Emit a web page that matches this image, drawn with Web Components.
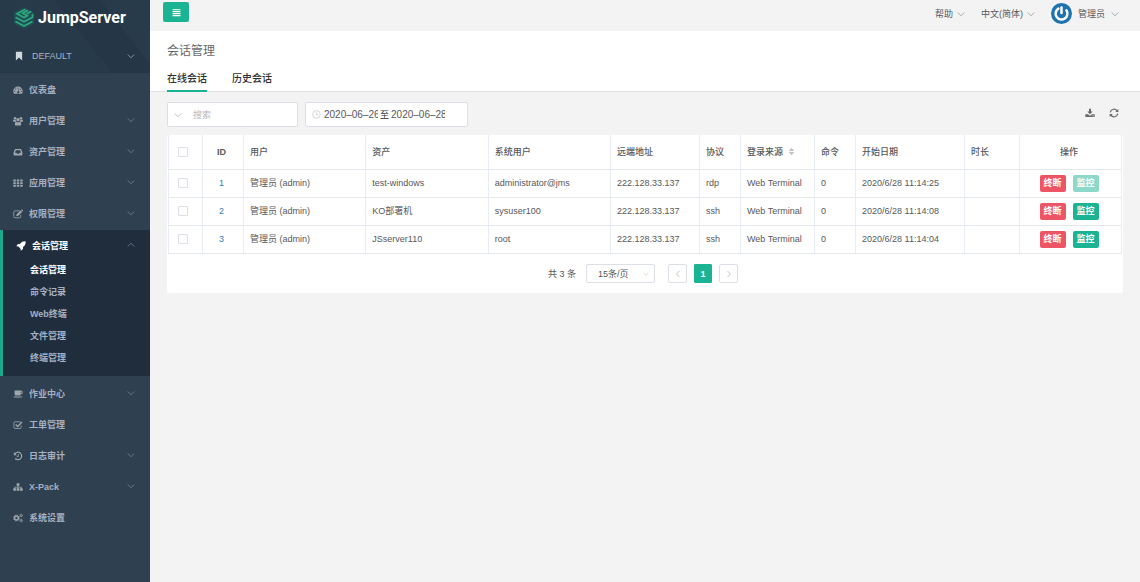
<!DOCTYPE html>
<html lang="zh-CN">
<head>
<meta charset="utf-8">
<title>会话管理 - JumpServer</title>
<style>
  html, body { margin: 0; min-height: 100%; }
  body {
    background: #f3f3f4;
    color: #56585c;
    font: 9px/14px "Liberation Sans", "Noto Sans CJK SC", sans-serif;
  }
</style>
</head>
<body>
<js-app>
  <js-sidebar slot="side">
    <js-nav-item icon="dashboard" label="仪表盘"></js-nav-item>
    <js-nav-item icon="users" label="用户管理" more></js-nav-item>
    <js-nav-item icon="inbox" label="资产管理" more></js-nav-item>
    <js-nav-item icon="th" label="应用管理" more></js-nav-item>
    <js-nav-item icon="edit" label="权限管理" more></js-nav-item>
    <js-nav-item icon="rocket" label="会话管理" more open>
      <js-sub-item label="会话管理" active></js-sub-item>
      <js-sub-item label="命令记录"></js-sub-item>
      <js-sub-item label="Web终端"></js-sub-item>
      <js-sub-item label="文件管理"></js-sub-item>
      <js-sub-item label="终端管理"></js-sub-item>
    </js-nav-item>
    <js-nav-item icon="coffee" label="作业中心" more></js-nav-item>
    <js-nav-item icon="check" label="工单管理"></js-nav-item>
    <js-nav-item icon="history" label="日志审计" more></js-nav-item>
    <js-nav-item icon="sitemap" label="X-Pack" more></js-nav-item>
    <js-nav-item icon="cogs" label="系统设置"></js-nav-item>
  </js-sidebar>
  <js-topbar></js-topbar>
  <js-page-head>
    <span slot="title">会话管理</span>
  </js-page-head>
  <js-toolbar></js-toolbar>
  <js-card>
    <js-session-table></js-session-table>
    <js-pagination></js-pagination>
  </js-card>
</js-app>

<script>
const define = (name, html, setup) => {
  const template = document.createElement('template');
  template.innerHTML = html;
  customElements.define(name, class extends HTMLElement {
    static observedAttributes = ['name'];
    constructor() {
      super();
      this.attachShadow({ mode: 'open' }).append(template.content.cloneNode(true));
    }
    connectedCallback() { if (setup) setup.call(this, this.shadowRoot); }
    attributeChangedCallback() { if (setup && this.isConnected) setup.call(this, this.shadowRoot); }
  });
};

const ICONS = {
  dashboard: '<path fill="currentColor" fill-rule="evenodd" d="M8 2.5A7.6 7.6 0 0 0 .4 10c0 1.500.4 2.900 1.100 4h13c.7-1.100 1.100-2.500 1.100-4A7.600 7.600 0 0 0 8 2.500zM2.700 9a1 1 0 1 1 0 2 1 1 0 0 1 0-2zm1.600-3.600a1 1 0 1 1 0 2 1 1 0 0 1 0-2zM8 3.800a1 1 0 1 1 0 2 1 1 0 0 1 0-2zm1 3 .9.200-.7 3a1.800 1.800 0 1 1-1-.2zm2.800-1.400a1 1 0 1 1 0 2 1 1 0 0 1 0-2zM13.300 9a1 1 0 1 1 0 2 1 1 0 0 1 0-2z"/>',
  users: '<g fill="currentColor"><circle cx="3.300" cy="3.600" r="2"/><circle cx="12.700" cy="3.600" r="2"/><circle cx="8" cy="5.800" r="2.700"/><path d="M.2 9V7.300C.2 6 .8 5.500 1.800 5.700c1 .6 1.900.6 2.800.2A3.700 3.700 0 0 0 5.300 9zM15.800 9V7.300c0-1.300-.6-1.800-1.600-1.600-1 .6-1.900.6-2.800.2A3.700 3.700 0 0 1 10.700 9zM3 13.400c0-2.600.6-4.300 2.400-4.400 1.600 1.200 3.600 1.200 5.200 0 1.800.1 2.400 1.800 2.400 4.400 0 1-.7 1.600-1.700 1.600H4.700C3.700 15 3 14.400 3 13.400z"/></g>',
  inbox: '<path fill="currentColor" fill-rule="evenodd" d="M4.100 3h7.800c.5 0 .8.2 1 .6L15 8.500v4c0 .6-.4 1-1 1H2c-.6 0-1-.4-1-1v-4l2.100-4.900c.2-.4.5-.6 1-.6zm.5 2L3 9h2.500l.9 1.800h3.200l.9-1.800H13l-1.600-4z"/>',
  th: '<path fill="currentColor" d="M.5 2.500h4v3h-4zM6 2.500h4v3H6zM11.500 2.500h4v3h-4zM.5 6.700h4v3h-4zM6 6.700h4v3H6zM11.500 6.700h4v3h-4zM.5 10.900h4v3h-4zM6 10.900h4v3H6zM11.500 10.900h4v3h-4z"/>',
  edit: '<g fill="none" stroke="currentColor"><path stroke-width="1.300" d="M11 3H3a1.800 1.800 0 0 0-1.800 1.800v7.400A1.800 1.800 0 0 0 3 14h7.500a1.800 1.800 0 0 0 1.800-1.800V9.500"/></g><path fill="currentColor" d="M5.500 11.300V8.700L12 2.200l2.600 2.600-6.500 6.500zM12.700 1.500l.7-.6c.4-.4.900-.4 1.200 0L16 2.300c.3.300.3.800 0 1.200l-.7.600z"/>',
  rocket: '<path fill="currentColor" d="M15.400.6c-4-.2-6.600 1-9.100 4.200H3.100L.5 8.500l3.300.2 3.500 3.500.2 3.300 3.700-2.600V9.700c3.200-2.500 4.400-5.100 4.200-9.100z"/>',
  coffee: '<path fill="currentColor" fill-rule="evenodd" d="M2.500 2.500h10.200a2.900 2.900 0 0 1 0 5.800h-.4c-.2 1.400-1 2.200-2.300 2.200H5c-1.600 0-2.500-.9-2.500-2.500zm9.800 1.600v2.600h.4a1.300 1.300 0 0 0 0-2.600zM.5 12h14.800c-.3 1.100-1.200 1.700-2.400 1.700h-10C1.700 13.700.8 13.100.5 12z"/>',
  check: '<g fill="none" stroke="currentColor"><path stroke-width="1.300" d="M12 2.800H3A1.500 1.500 0 0 0 1.500 4.300V12A1.500 1.500 0 0 0 3 13.500h8.500A1.500 1.500 0 0 0 13 12V9"/><path stroke-width="2.200" d="m4.300 7.200 3.100 3.100 7-7"/></g>',
  history: '<path fill="none" stroke="currentColor" stroke-width="1.900" d="M3 4.300A6 6 0 1 1 3.400 12"/><path fill="currentColor" d="M1.300 1.800v5h5z"/><path fill="none" stroke="currentColor" stroke-width="1.300" d="M8.500 5v4H5.800"/>',
  sitemap: '<path fill="currentColor" d="M5.800 2h4.400v4H8.700v1.500h5.100V10h1.700v4h-4.200v-4h1.200V8.700H8.700V10h1.500v4H5.800v-4h1.500V8.700H3.500V10h1.200v4H.5v-4h1.700V7.500h5.100V6H5.800z"/>',
  cogs: '<g fill="none" stroke="currentColor"><circle cx="5.500" cy="8" r="3.100" stroke-width="2.300"/><circle cx="5.500" cy="8" r="4.700" stroke-width="1.400" stroke-dasharray="1.800 1.890"/><circle cx="13" cy="4" r="1.500" stroke-width="1.300"/><circle cx="13" cy="12" r="1.500" stroke-width="1.300"/><circle cx="13" cy="4" r="2.400" stroke-width=".9" stroke-dasharray="1.200 1.310"/><circle cx="13" cy="12" r="2.400" stroke-width=".9" stroke-dasharray="1.200 1.310"/></g>',
  bookmark: '<path fill="currentColor" d="M3 1h10v14l-5-4.500L3 15z"/>',
  bars: '<path fill="currentColor" d="M1 2h14v2H1zM1 5.500h14v2H1zM1 9h14v2H1zM1 12.500h14v2H1z"/>',
  down: '<path fill="none" stroke="currentColor" stroke-width="1.500" d="m1.500 5 6.500 6.500L14.500 5"/>',
  up: '<path fill="none" stroke="currentColor" stroke-width="1.500" d="M1.500 11 8 4.500l6.500 6.500"/>',
  left: '<path fill="none" stroke="currentColor" stroke-width="1.700" d="M11 2 5 8l6 6"/>',
  right: '<path fill="none" stroke="currentColor" stroke-width="1.700" d="m5 2 6 6-6 6"/>',
  clock: '<g fill="none" stroke="currentColor" stroke-width="1.200"><circle cx="8" cy="8" r="6.800"/><path d="M8 4v4.500h3.500"/></g>',
  download: '<path fill="currentColor" fill-rule="evenodd" d="M6.400 1h3.200v4.500h2.900L8 10 3.500 5.500h2.900zM.5 9.800h4.300L8 12.500l3.200-2.700h4.300v4.700H.5zm10.300 2.200v1.200H12V12zm2.200 0v1.200h1.200V12z"/>',
  refresh: '<g fill="none" stroke="currentColor" stroke-width="1.900"><path d="M2 7a6.100 6.100 0 0 1 11-2.500M14 9a6.100 6.100 0 0 1-11 2.500"/></g><path fill="currentColor" d="M15 1.500v5h-5zM1 14.500v-5h5z"/>',
  sort: '<path fill="currentColor" d="M8 1.500 13 7H3zM8 14.500 3 9h10z"/>',
  avatar: '<circle cx="8" cy="8" r="8" fill="#1e73ae"/><path d="M5.600 4.300A4.500 4.500 0 1 0 11.800 5.600" fill="none" stroke="#fff" stroke-width="1.900" stroke-linecap="round"/><path d="M8 3.500v4.200" fill="none" stroke="#fff" stroke-width="1.900" stroke-linecap="round"/>'
};

define('js-icon', `
  <style>
    :host { display: inline-flex; flex: none; width: 10px; height: 10px; }
    svg { display: block; width: 100%; height: 100%; }
  </style>
  <svg viewBox="0 0 16 16" aria-hidden="true"></svg>`,
  function (root) { root.querySelector('svg').innerHTML = ICONS[this.getAttribute('name')] || ''; });

define('js-app', `
  <style>
    :host { display: grid; grid-template-columns: 150px minmax(0, 1fr); min-height: 100vh; }
    main { min-width: 0; }
  </style>
  <slot name="side"></slot>
  <main><slot></slot></main>`);

define('js-logo', `
  <style>
    :host { display: block; }
    a { display: flex; align-items: center; gap: 4px; color: #fff; text-decoration: none;
        font: 700 16px/22px Roboto, sans-serif; }
    svg { width: 20px; height: 22px; flex: none; }
  </style>
  <a href="#">
    <svg viewBox="0 0 20 22" aria-hidden="true">
      <path d="M10 0 20 5.500v11L10 22 0 16.500v-11z" fill="#1d4f53"/>
      <g fill="none" stroke="#2fa67f" stroke-width="1.800">
        <path d="M11.500 2.200 3 6.700l7 3.800 3.300-1.800-4.500-2.500 5.200-2.800"/>
        <path d="m12.500 7 4.700-2.600"/>
        <path d="M1.500 10.200 10 14.800l8.500-4.600V7"/>
        <path d="m1.500 14.500 8.500 4.600 8.500-4.600"/>
      </g>
    </svg>
    <span>JumpServer</span>
  </a>`);

define('js-sidebar', `
  <style>
    :host { display: block; background: #2f4050; color: #a7b1c2; }
    header { box-sizing: border-box; height: 73px; padding: 7px 15px 0 14px;
      background: linear-gradient(52deg, #273a4a 0 54%, #253746 54% 76%, #283b4b 76%); }
    nav { padding-top: 1px; }
    .org { display: flex; align-items: center; width: 100%; height: 22px; margin-top: 16px; padding: 0;
      border: 0; background: none; color: inherit; font: inherit; text-align: left; }
    .org span { flex: 1; margin-left: 8px; }
    .org js-icon:first-child { color: #d3d8e0; }
    .org js-icon:last-child { width: 8px; height: 8px; }
  </style>
  <header>
    <js-logo></js-logo>
    <button class="org" type="button"><js-icon name="bookmark"></js-icon><span>DEFAULT</span><js-icon name="down"></js-icon></button>
  </header>
  <nav aria-label="主菜单"><slot></slot></nav>`);

define('js-nav-item', `
  <style>
    :host { display: block; font-weight: 700; }
    :host([open]) { border-left: 3px solid #19aa8d; background: #1f2d3d; padding-bottom: 9px; margin: 1px 0 2px; color: #fff; }
    a { display: flex; align-items: center; height: 31px; padding: 0 15px 0 13px; color: inherit; text-decoration: none; }
    span { flex: 1; margin-left: 6px; }
    .icon { color: #a0a6ad; }
    :host([open]) .icon { color: #fff; }
    .arrow { width: 8px; height: 8px; margin-bottom: 2px; color: #7d8a9b; }
    .subs { display: flex; flex-direction: column; gap: 4px; }
  </style>
  <a href="#"><js-icon class="icon"></js-icon><span></span></a>
  <div class="subs"><slot></slot></div>`,
  function (root) {
    const link = root.querySelector('a');
    root.querySelector('.icon').setAttribute('name', this.getAttribute('icon'));
    root.querySelector('span').textContent = this.getAttribute('label');
    if (this.hasAttribute('more') && !root.querySelector('.arrow')) {
      const arrow = document.createElement('js-icon');
      arrow.className = 'arrow';
      arrow.setAttribute('name', this.hasAttribute('open') ? 'up' : 'down');
      link.append(arrow);
    }
  });

define('js-sub-item', `
  <style>
    :host { display: block; color: #a7b1c2; }
    :host([active]) { color: #fff; }
    a { display: block; padding-left: 27px; line-height: 18px; color: inherit; text-decoration: none; }
  </style>
  <a href="#"></a>`,
  function (root) { root.querySelector('a').textContent = this.getAttribute('label'); });

define('js-topbar', `
  <style>
    :host { display: flex; justify-content: space-between; height: 31px; padding: 0 21px 0 13px; }
    button { border: 0; padding: 0; background: none; color: inherit; font: inherit; }
    .toggle { display: flex; align-items: center; justify-content: center; width: 26px; height: 20px;
      margin-top: 2px; border-radius: 2px; background: #1ab394; color: #fff; }
    .toggle js-icon { width: 9px; height: 9px; }
    nav { display: flex; align-items: center; height: 27px; gap: 16px; }
    nav button { display: flex; align-items: center; gap: 4px; }
    nav js-icon { width: 8px; height: 8px; color: #8c9096; }
    nav .face { width: 21px; height: 21px; }
    .user { gap: 6px; }
  </style>
  <button class="toggle" type="button" aria-label="菜单"><js-icon name="bars"></js-icon></button>
  <nav>
    <button type="button">帮助<js-icon name="down"></js-icon></button>
    <button type="button">中文(简体)<js-icon name="down"></js-icon></button>
    <button type="button" class="user"><js-icon class="face" name="avatar"></js-icon>管理员<js-icon name="down"></js-icon></button>
  </nav>`);

define('js-page-head', `
  <style>
    :host { display: block; padding: 10px 17px 0; background: #fff; border-bottom: 1px solid #dfe2e6; }
    h1 { margin: 0; color: #676a6c; font-size: 12px; line-height: 20px; font-weight: 400; }
    nav { display: flex; gap: 25px; margin-top: 8px; }
    a { padding: 2px 0 3px; border-bottom: 2px solid transparent; color: #303133; font-size: 10px;
      line-height: 16px; font-weight: 500; text-decoration: none; margin-bottom: -1px; }
    a[aria-current] { border-color: #1ab394; }
  </style>
  <h1><slot name="title"></slot></h1>
  <nav><a href="#online" aria-current="page">在线会话</a><a href="#history">历史会话</a></nav>`);

define('js-toolbar', `
  <style>
    :host { display: flex; align-items: center; gap: 7px; padding: 10px 17px 8px; }
    .box { box-sizing: border-box; display: flex; align-items: center; height: 25px; padding: 0 8px 0 6px;
      background: #fff; border: 1px solid #dcdfe6; border-radius: 2px; }
    .search { width: 131px; }
    .dates { width: 163px; color: #303133; }
    input { min-width: 0; padding: 0; border: 0; outline: 0; background: none; color: #56585c; font: inherit; }
    .search input { flex: 1; margin-left: 11px; }
    ::placeholder { color: #b4b8bf; opacity: 1; }
    .dates input { width: 54px; font-size: 10px; }
    .dates span { margin: 0 2px; }
    .box js-icon { width: 8px; height: 8px; color: #a8abb2; }
    .dates js-icon { width: 9px; height: 9px; margin-right: 3px; color: #c0c4cc; }
    .tools { display: flex; gap: 14px; margin: 0 4px 4px auto; }
    button { display: flex; padding: 0; border: 0; background: none; color: #676a6c; }
  </style>
  <label class="box search"><js-icon name="down"></js-icon><input type="text" placeholder="搜索" aria-label="搜索"></label>
  <div class="box dates"><js-icon name="clock"></js-icon><input type="text" value="2020–06–26" aria-label="开始日期"><span>至</span><input type="text" value="2020–06–28" aria-label="结束日期"></div>
  <div class="tools">
    <button type="button" aria-label="导出"><js-icon name="download"></js-icon></button>
    <button type="button" aria-label="刷新"><js-icon name="refresh"></js-icon></button>
  </div>`);

define('js-card', `
  <style>
    :host { display: block; margin: 0 17px; padding: 0 1px; background: #fff; border-radius: 2px; }
  </style>
  <slot></slot>`);

define('js-session-table', `
  <style>
    :host { display: block; }
    table { width: 100%; table-layout: fixed; border-collapse: separate; border-spacing: 0; border-left: 1px solid #e8edf5; }
    th, td { box-sizing: border-box; height: 28px; padding: 0 0 1px 6px; border-right: 1px solid #e8edf5;
      border-bottom: 1px solid #e3e8f1; text-align: left; white-space: nowrap; color: #56585c; }
    th { height: 35px; font-weight: 500; }
    .pick { padding-left: 9px; }
    .mid { padding: 0 3px 1px 0; text-align: center; }
    th.id { font-weight: 700; }
    td a { color: #337ab7; text-decoration: none; }
    input { display: block; appearance: none; box-sizing: border-box; width: 10px; height: 10px; margin: 0;
      border: 1px solid #dcdfe6; border-radius: 1px; background: #fff; }
    .ops { display: flex; justify-content: center; gap: 7px; }
    .ops button { width: 26px; height: 17px; padding: 0; border: 0; border-radius: 2px; color: #fff;
      font: inherit; font-weight: 700; background: #1ab394; }
    .ops .kill { background: #ed5565; }
    .ops button:disabled { background: #8cd9c9; }
    .sort { display: inline-flex; align-items: center; gap: 4px; padding: 0; border: 0; background: none; color: inherit; font: inherit; }
    .sort js-icon { width: 9px; height: 9px; color: #c0c4cc; }
  </style>
  <table>
    <colgroup>
      <col style="width:34px"><col style="width:41px"><col><col><col><col style="width:89px"><col style="width:41px"><col style="width:74px"><col style="width:41px"><col style="width:109px"><col style="width:55px"><col style="width:102px">
    </colgroup>
    <thead>
      <tr>
        <th class="pick"><input type="checkbox" aria-label="全选"></th>
        <th class="mid id">ID</th><th>用户</th><th>资产</th><th>系统用户</th><th>远端地址</th><th>协议</th>
        <th><button class="sort" type="button">登录来源<js-icon name="sort"></js-icon></button></th>
        <th>命令</th><th>开始日期</th><th>时长</th><th class="mid">操作</th>
      </tr>
    </thead>
    <tbody></tbody>
  </table>`,
  function (root) {
    const rows = [
      ['test-windows', 'administrator@jms', 'rdp', '25', true],
      ['KO部署机', 'sysuser100', 'ssh', '08', false],
      ['JSserver110', 'root', 'ssh', '04', false]
    ];
    root.querySelector('tbody').innerHTML = rows.map(([asset, account, protocol, seconds, locked], i) => `
      <tr>
        <td class="pick"><input type="checkbox" aria-label="选择 ${i + 1}"></td>
        <td class="mid"><a href="#${i + 1}">${i + 1}</a></td>
        <td>管理员 (admin)</td><td>${asset}</td><td>${account}</td><td>222.128.33.137</td><td>${protocol}</td>
        <td>Web Terminal</td><td>0</td><td>2020/6/28 11:14:${seconds}</td><td></td>
        <td class="mid"><div class="ops"><button type="button" class="kill">终断</button><button type="button"${locked ? ' disabled' : ''}>监控</button></div></td>
      </tr>`).join('');
  });

define('js-pagination', `
  <style>
    :host { display: flex; align-items: center; justify-content: center; height: 39px; padding-right: 4px; }
    .size { position: relative; display: flex; align-items: center; margin: 0 13px 0 10px; }
    select { appearance: none; box-sizing: border-box; width: 69px; height: 19px; padding: 0 16px 0 11px; border: 1px solid #dcdfe6;
      border-radius: 2px; background: #fff; color: #56585c; font: inherit; }
    .size js-icon { position: absolute; right: 6px; width: 6px; height: 6px; color: #c0c4cc; pointer-events: none; }
    .pages { display: flex; gap: 7px; }
    .pages button { box-sizing: border-box; display: flex; align-items: center; justify-content: center; width: 19px; height: 19px;
      padding: 0; border: 1px solid #dcdfe6; border-radius: 2px; background: #fff; color: #b4b8bf; font: inherit; }
    .pages [aria-current] { width: 18px; border-color: #1ab394; border-radius: 1px; background: #1ab394; color: #fff; font-weight: 700; }
    .pages js-icon { width: 8px; height: 8px; }
  </style>
  <span>共 3 条</span>
  <div class="size"><select aria-label="每页条数"><option>15条/页</option></select><js-icon name="down"></js-icon></div>
  <div class="pages">
    <button type="button" aria-label="上一页"><js-icon name="left"></js-icon></button>
    <button type="button" aria-current="page">1</button>
    <button type="button" aria-label="下一页"><js-icon name="right"></js-icon></button>
  </div>`);
</script>
</body>
</html>
